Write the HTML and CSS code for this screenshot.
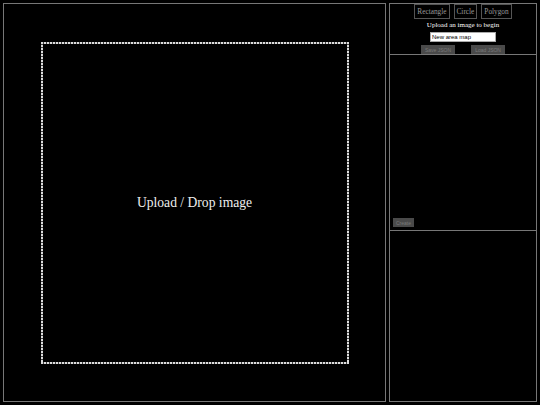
FILE: index.html
```html
<!DOCTYPE html>
<html lang="en">
<head>
  <meta charset="UTF-8">
  <meta name="viewport" content="width=device-width, initial-scale=1.0">
  <title>Image Map Editor</title>
  <link rel="stylesheet" href="styles.css">
</head>
<body>

  <div class="editor">
    <!-- Zona immagine -->
    <div class="canvas-panel">
      <div class="drop-zone">Upload / Drop image</div>
    </div>

    <!-- Pannello laterale -->
    <div class="side-panel">
      <div class="side-header">
        <div class="tools">
          <button class="tool">Rectangle</button>
          <button class="tool">Circle</button>
          <button class="tool">Polygon</button>
        </div>
        <div class="status">Upload an image to begin</div>
        <input class="map-name" type="text" value="New area map">
        <div class="actions">
          <button class="action" disabled>Save JSON</button>
          <button class="action" disabled>Load JSON</button>
        </div>
      </div>

      <div class="area-list">
        <button class="action" disabled>Create</button>
      </div>

      <div class="area-details"></div>
    </div>
  </div>

</body>
</html>
```

FILE: styles.css
```css
body, html {
  margin: 0;
  padding: 0;
  background-color: #000;
  font-family: 'Liberation Serif', 'Times New Roman', serif;
  color: #fff;
}

.editor {
  display: flex;
  gap: 3px;
  padding: 3px;
  height: 399px;
}

.canvas-panel {
  width: 381px;
  border: 1px solid #777;
  display: flex;
  justify-content: center;
  align-items: center;
}

/* bordo tratteggiato fine, disegnato con gradienti */
.drop-zone {
  width: 308px;
  height: 322px;
  display: flex;
  justify-content: center;
  align-items: center;
  font-size: 13.6px;
  color: #eee;
  margin-top: 1px;
  background:
    repeating-linear-gradient(90deg, #ddd 0 2px, #444 2px 3px) top / 100% 2px no-repeat,
    repeating-linear-gradient(90deg, #ddd 0 2px, #444 2px 3px) bottom / 100% 2px no-repeat,
    repeating-linear-gradient(180deg, #ddd 0 2px, #444 2px 3px) left / 2px 100% no-repeat,
    repeating-linear-gradient(180deg, #ddd 0 2px, #444 2px 3px) right / 2px 100% no-repeat;
}

.side-panel {
  flex: 1;
  border: 1px solid #777;
  display: flex;
  flex-direction: column;
}

.side-header {
  display: flex;
  flex-direction: column;
  align-items: center;
  border-bottom: 1px solid #777;
  height: 50px;
}

.tools {
  display: flex;
  gap: 4px;
  height: 15px;
}

.tool {
  margin: 0;
  padding: 0 2px;
  background-color: #000;
  border: 1px solid #555;
  color: #999;
  font-family: 'Liberation Serif', 'Times New Roman', serif;
  font-size: 7.3px;
  cursor: pointer;
}

.status {
  margin-top: 2px;
  font-size: 7px;
  line-height: 9px;
}

.map-name {
  margin: 2px 0 0;
  box-sizing: border-box;
  width: 66px;
  height: 10px;
  padding: 0 1px;
  border: 1px solid #aaa;
  background-color: #fff;
  font-family: 'Liberation Sans', Arial, sans-serif;
  font-size: 6px;
  color: #000;
}

.actions {
  display: flex;
  gap: 16px;
  margin-top: 3px;
}

.action {
  margin: 0;
  height: 9px;
  padding: 0 4px;
  border: none;
  background-color: #4a4a4a;
  color: #7a7a7a;
  font-family: 'Liberation Sans', Arial, sans-serif;
  font-size: 5px;
}

.area-list {
  height: 176px;
  border-bottom: 1px solid #777;
  display: flex;
  align-items: flex-end;
  padding: 0 3px 3px;
  box-sizing: border-box;
}

.area-list .action {
  padding: 0 3px;
}

.area-details {
  flex: 1;
}
```
